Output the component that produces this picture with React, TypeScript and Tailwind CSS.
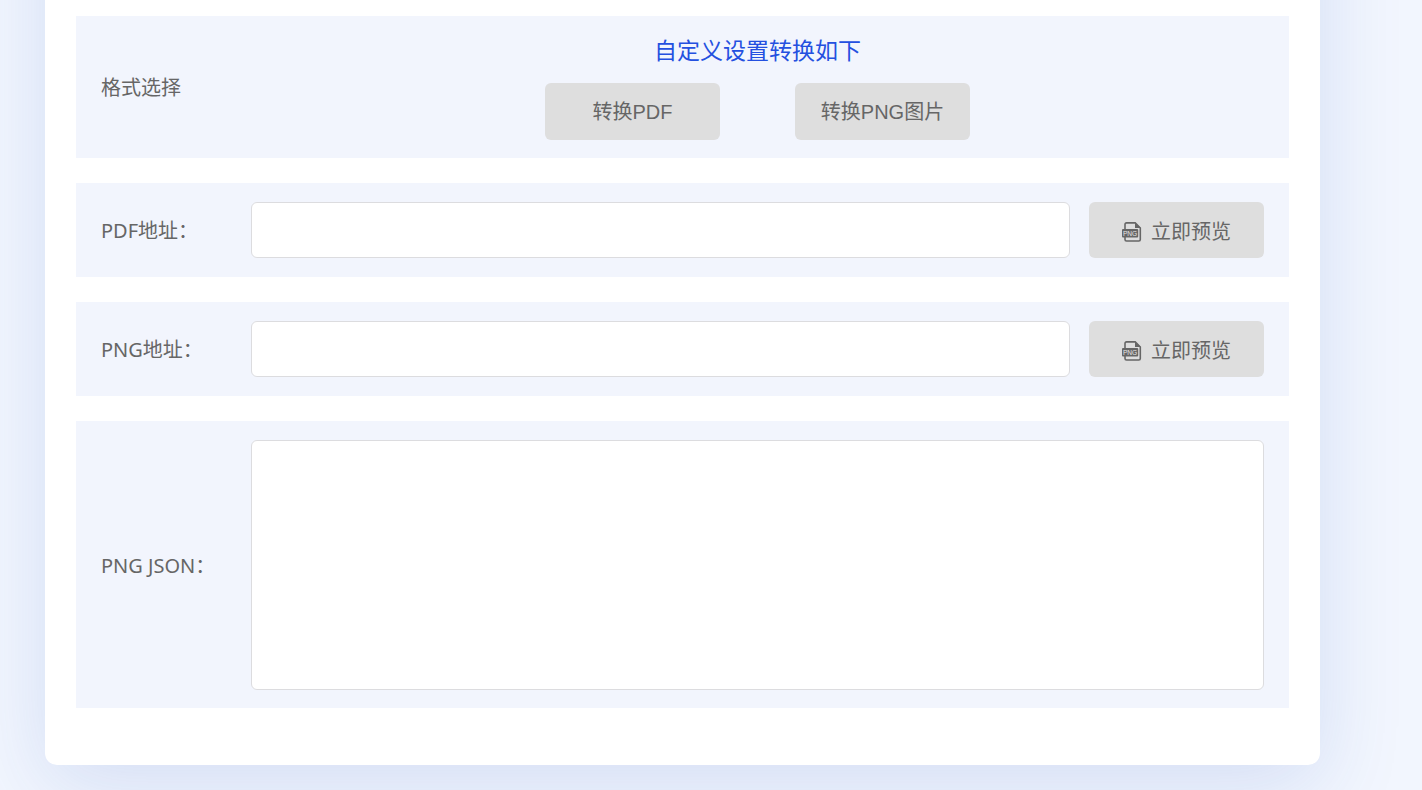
import { useState } from "react";
import clsx from "clsx";

const buttonStyles =
  "flex items-center justify-center w-[175px] shrink-0 rounded-md bg-[#dedede] text-xl text-[#666666] font-['Liberation_Sans','Noto_Sans_CJK_SC',sans-serif] hover:bg-[#d4d4d4]";

const fieldStyles = "min-w-0 flex-1 rounded-md border border-[#dcdcdf] bg-white px-4 text-xl outline-none focus:border-[#2450e0]";

const labelStyles = "w-[150px] shrink-0 pt-[2px] text-xl";

const PngIcon = () => (
  <svg width="20" height="20" viewBox="0 0 20 20" fill="none" aria-hidden="true">
    <path d="M3 8V2.4C3 1.5 3.6.9 4.5.9H13.2L18.3 6V17.5C18.3 18.4 17.7 19 16.8 19H4.5C3.6 19 3 18.4 3 17.5V15" stroke="#666666" strokeWidth="1.6" />
    <path d="M13 .6V6H18.8Z" fill="#666666" />
    <rect x="0" y="7" width="16.2" height="8.4" rx="1" fill="#666666" />
    <text x="8.1" y="13.6" textAnchor="middle" fontSize="6.6" fontFamily="Liberation Sans, sans-serif" fill="#e6e6e6">
      PNG
    </text>
  </svg>
);

type AddressRowProps = {
  id: string;
  label: string;
};

const AddressRow = ({ id, label }: AddressRowProps) => {
  const [value, setValue] = useState("");
  return (
    <div className="flex items-center bg-[#f2f5fd] px-[25px] py-[19px]">
      <label htmlFor={id} className={labelStyles}>
        {label}
      </label>
      <input id={id} type="text" value={value} onChange={(e) => setValue(e.target.value)} className={clsx(fieldStyles, "h-14")} />
      <button type="button" className={clsx(buttonStyles, "ml-[19px] h-14 gap-[9px] pt-[3px]")}>
        <PngIcon />
        立即预览
      </button>
    </div>
  );
};

const App = () => {
  const [json, setJson] = useState("");
  return (
    <main className="flex min-h-screen flex-col overflow-hidden bg-[#f2f6fe] pb-[25px] font-['Noto_Sans','Noto_Sans_CJK_SC',sans-serif] text-[#666666]">
      <section className="-mt-40 mr-[102px] ml-[45px] flex flex-col gap-[25px] rounded-xl bg-white px-[31px] pt-44 pb-[57px] shadow-[0_20px_84px_rgba(40,86,190,0.15)]">
        <div className="flex items-center bg-[#f2f5fd] px-[25px] py-[18px]">
          <p className={labelStyles}>格式选择</p>
          <div className="flex flex-1 flex-col items-center gap-4">
            <h2 className="text-[23px] leading-[33px] text-[#2450e0]">自定义设置转换如下</h2>
            <div className="flex gap-[75px]">
              <button type="button" className={clsx(buttonStyles, "h-[57px] pt-px")}>
                转换PDF
              </button>
              <button type="button" className={clsx(buttonStyles, "h-[57px] pt-px")}>
                转换PNG图片
              </button>
            </div>
          </div>
        </div>
        <AddressRow id="pdf-url" label="PDF地址：" />
        <AddressRow id="png-url" label="PNG地址：" />
        <div className="flex items-center bg-[#f2f5fd] px-[25px] pt-[19px] pb-[18px]">
          <label htmlFor="png-json" className={labelStyles}>
            PNG JSON：
          </label>
          <textarea id="png-json" value={json} onChange={(e) => setJson(e.target.value)} className={clsx(fieldStyles, "h-[250px] resize-none py-3")} />
        </div>
      </section>
    </main>
  );
};

export default App;
